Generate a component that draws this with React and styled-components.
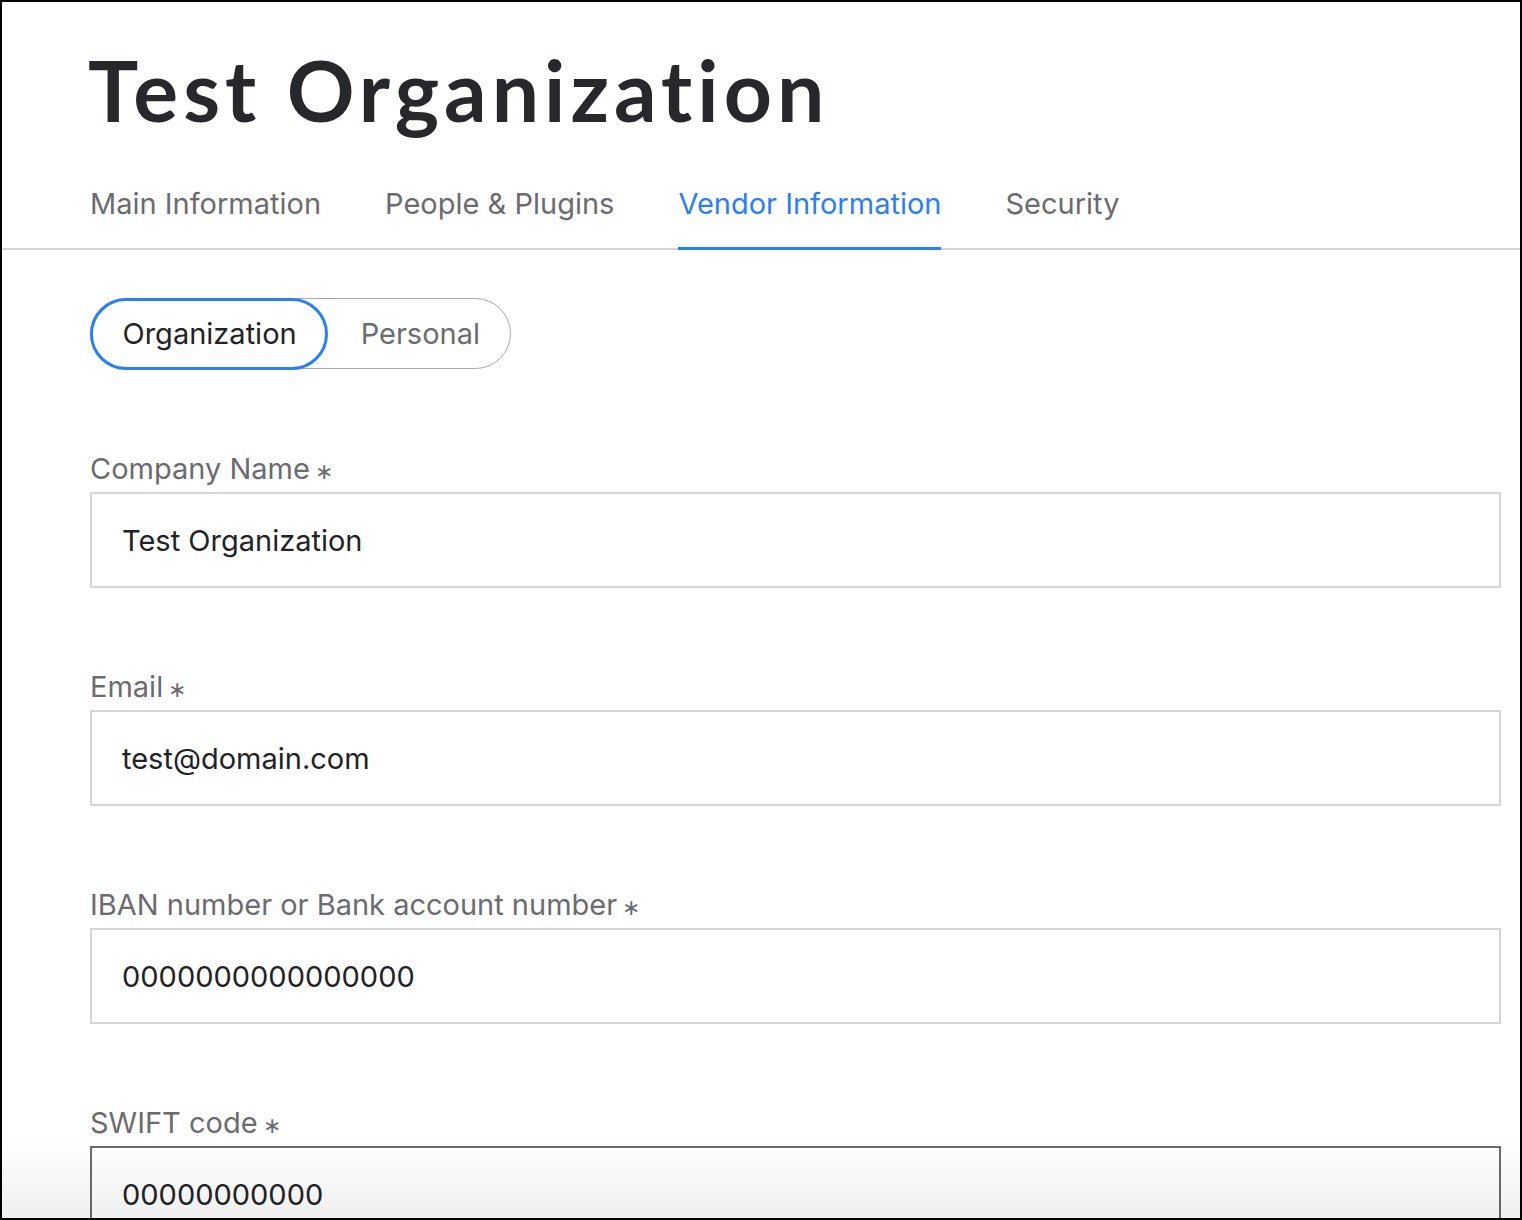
import styled, { createGlobalStyle } from "styled-components";

const GlobalStyle = createGlobalStyle`
  html, body {
    margin: 0;
    padding: 0;
    background: #fff;
  }
  * {
    box-sizing: border-box;
  }
`;

const Frame = styled.div`
  position: relative;
  height: 1220px;
  border: 2px solid #000;
  overflow: hidden;
  font-family: Inter, "Noto Sans", sans-serif;
  color: #222326;

  &::after {
    content: "";
    position: absolute;
    left: 0;
    right: 0;
    bottom: 0;
    height: 80px;
    background: linear-gradient(rgba(0, 0, 0, 0), rgba(0, 0, 0, 0.06));
    pointer-events: none;
  }
`;

const Header = styled.header`
  padding: 38px 0 0 86px;
`;

const Title = styled.h1`
  margin: 0;
  font-family: Lato, sans-serif;
  font-weight: 700;
  font-size: 84px;
  line-height: 100px;
  letter-spacing: 5px;
  font-variant-ligatures: none;
  color: #27282c;
`;

const TabBar = styled.nav`
  display: flex;
  gap: 64px;
  padding: 0 0 0 88px;
  margin-top: 47px;
  border-bottom: 2px solid #d4d4d4;
`;

const Tab = styled.button`
  border: none;
  background: none;
  padding: 0 0 26px;
  margin-bottom: -2px;
  font-family: inherit;
  font-size: 29px;
  line-height: 34px;
  color: ${(p) => (p.$active ? "#2a80f0" : "#6b6b70")};
  border-bottom: 3px solid ${(p) => (p.$active ? "#2a80f0" : "transparent")};
  cursor: pointer;
`;

const Content = styled.main`
  padding: 48px 19px 0 88px;
`;

const Toggle = styled.div`
  display: inline-flex;
  border: 1.5px solid #a8a8a8;
  border-radius: 36px;
  height: 71px;
  margin-bottom: 83px;
`;

const ToggleOption = styled.button`
  font-family: inherit;
  font-size: 29px;
  background: none;
  padding: 0 28px 0 ${(p) => (p.$active ? "30px" : "33px")};
  margin: -1.5px;
  border-radius: 36px;
  border: 3px solid ${(p) => (p.$active ? "#2a80f0" : "transparent")};
  color: ${(p) => (p.$active ? "#222326" : "#6b6b70")};
  cursor: pointer;
`;

const Field = styled.div`
  display: flex;
  flex-direction: column;
  gap: 6px;
  margin-bottom: 82px;
`;

const Label = styled.label`
  display: block;
  height: 34px;
  font-size: 29px;
  line-height: 34px;
  color: #6b6b70;

  & span {
    font-size: 22px;
    line-height: 1;
    margin-left: 5px;
  }
`;

const Input = styled.input`
  height: 96px;
  width: 100%;
  padding: 0 30px;
  font-family: inherit;
  font-size: 29px;
  color: #222326;
  border: 2px solid ${(p) => (p.$focused ? "#6b6b70" : "#d6d6d6")};
  outline: none;
  background: #fff;
`;

const fields = [
  { label: "Company Name", value: "Test Organization" },
  { label: "Email", value: "test@domain.com" },
  { label: "IBAN number or Bank account number", value: "0000000000000000" },
  { label: "SWIFT code", value: "00000000000", focused: true },
];

function App() {
  return (
    <>
      <GlobalStyle />
      <Frame>
        <Header>
          <Title>Test Organization</Title>
        </Header>
        <TabBar>
          <Tab>Main Information</Tab>
          <Tab>People &amp; Plugins</Tab>
          <Tab $active>Vendor Information</Tab>
          <Tab>Security</Tab>
        </TabBar>
        <Content>
          <Toggle>
            <ToggleOption $active>Organization</ToggleOption>
            <ToggleOption>Personal</ToggleOption>
          </Toggle>
          {fields.map((f) => (
            <Field key={f.label}>
              <Label>
                {f.label}
                <span>∗</span>
              </Label>
              <Input readOnly value={f.value} $focused={f.focused} />
            </Field>
          ))}
        </Content>
      </Frame>
    </>
  );
}

export default App;
